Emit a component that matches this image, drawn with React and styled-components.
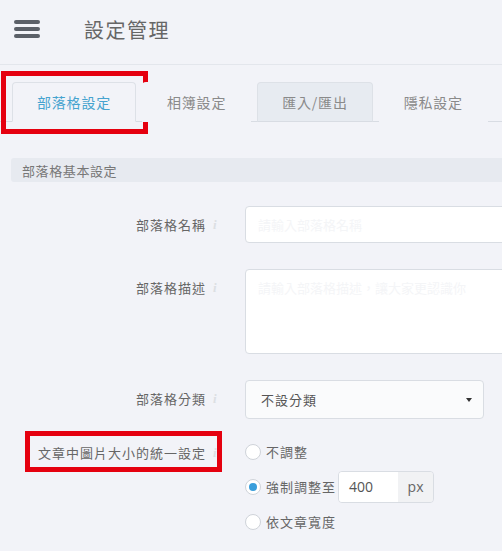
import styled, { createGlobalStyle } from "styled-components";

const GlobalStyle = createGlobalStyle`
  html, body {
    margin: 0;
    padding: 0;
    background: #f2f3f8;
    overflow: hidden;
  }
  body {
    font-family: "Noto Sans CJK TC", "Noto Sans", sans-serif;
    color: #666;
  }
  * { box-sizing: border-box; }
`;

const Page = styled.div`
  width: 680px;
  min-height: 551px;
`;

const TopBar = styled.header`
  display: flex;
  align-items: center;
  height: 65px;
  padding-left: 14px;
  border-bottom: 1px solid #e3e6ec;
`;

const Burger = styled.button`
  display: flex;
  flex-direction: column;
  gap: 3.5px;
  width: 26px;
  padding: 0;
  margin-top: -6px;
  border: 0;
  background: none;
  span {
    display: block;
    height: 3.5px;
    border-radius: 2px;
    background: #5b6068;
  }
`;

const Title = styled.h1`
  margin: -6px 0 0 44px;
  font-size: 20px;
  font-weight: 400;
  letter-spacing: 1.5px;
  color: #666;
`;

const TabBar = styled.nav`
  display: flex;
  gap: 6px;
  margin-top: 17px;
  padding-left: 12px;
  border-bottom: 1px solid #d8dce3;
`;

const Tab = styled.div`
  position: relative;
  height: 40px;
  margin-bottom: -1px;
  padding: 0 24px;
  display: flex;
  align-items: center;
  font-size: 14px;
  letter-spacing: 0.8px;
  border: 1px solid ${(p) => (p.$active || p.$shaded ? "#dde1e7" : "transparent")};
  border-bottom-color: ${(p) => (p.$active ? "#f2f3f8" : p.$shaded ? "#d8dce3" : "transparent")};
  border-radius: 4px 4px 0 0;
  background: ${(p) => (p.$shaded ? "#e7ebf1" : "#f2f3f8")};
  color: ${(p) => (p.$active ? "#46a3cf" : "#8a8a8a")};
`;

const Highlight = styled.div`
  position: absolute;
  border: 5px solid #e5000f;
  pointer-events: none;
  top: ${(p) => p.$top}px;
  left: ${(p) => p.$left}px;
  width: ${(p) => p.$w}px;
  height: ${(p) => p.$h}px;
`;

const Content = styled.section`
  padding: 36px 0 0 11px;
`;

const SectionHead = styled.div`
  height: 24px;
  display: flex;
  align-items: center;
  padding-left: 11px;
  border-radius: 3px 0 0 3px;
  background: #e7eaf0;
  font-size: 13px;
  letter-spacing: 0.6px;
  color: #777;
`;

const Row = styled.div`
  display: flex;
  align-items: flex-start;
  margin-top: ${(p) => p.$gap}px;
  margin-left: -11px;
`;

const LabelCell = styled.div`
  position: relative;
  width: 245px;
  height: 37px;
  flex-shrink: 0;
  display: flex;
  justify-content: flex-end;
  align-items: center;
  padding-right: 26px;
`;

const LabelText = styled.label`
  font-size: 13px;
  letter-spacing: 1px;
  color: #666;
`;

const Info = styled.span`
  width: 6px;
  margin-left: 7px;
  font-family: "Liberation Serif", serif;
  font-style: italic;
  font-weight: 700;
  font-size: 13px;
  color: #dcdfe3;
`;

const TextInput = styled.input`
  width: 400px;
  height: 37px;
  padding: 0 12px;
  border: 1px solid #d9dde3;
  border-radius: 4px;
  background: #fff;
  font-family: inherit;
  font-size: 13px;
  &::placeholder { color: #f4f5f7; }
`;

const TextArea = styled.textarea`
  width: 400px;
  height: 85px;
  padding: 8px 12px;
  border: 1px solid #d9dde3;
  border-radius: 4px;
  background: #fff;
  resize: none;
  font-family: inherit;
  font-size: 13px;
  &::placeholder { color: #f4f5f7; }
`;

const Select = styled.div`
  width: 239px;
  height: 39px;
  display: flex;
  align-items: center;
  justify-content: space-between;
  padding: 0 11px 0 15px;
  border: 1px solid #d9dde3;
  border-radius: 4px;
  background: #fafbfc;
  font-size: 13px;
  letter-spacing: 1px;
  color: #555;
`;

const Caret = styled.span`
  width: 0;
  height: 0;
  border-left: 3.5px solid transparent;
  border-right: 3.5px solid transparent;
  border-top: 4px solid #333;
`;

const RadioGroup = styled.div`
  display: flex;
  flex-direction: column;
`;

const RadioItem = styled.label`
  display: flex;
  align-items: center;
  height: 35px;
  font-size: 13px;
  letter-spacing: 1px;
  color: #666;
`;

const RadioDot = styled.span`
  width: 16px;
  height: 16px;
  margin-right: 5px;
  border-radius: 50%;
  border: 1px solid #cfd3d9;
  background: #fff;
  display: flex;
  align-items: center;
  justify-content: center;
  &::after {
    content: "";
    width: 8px;
    height: 8px;
    border-radius: 50%;
    background: ${(p) => (p.$checked ? "#3a9edb" : "transparent")};
  }
`;

const InputGroup = styled.div`
  display: flex;
  height: 32px;
  width: 96px;
  margin-left: 2px;
  border: 1px solid #d9dde3;
  border-radius: 4px;
  overflow: hidden;
  letter-spacing: 0;
`;

const NumberField = styled.div`
  flex: 1;
  display: flex;
  align-items: center;
  padding-left: 10px;
  background: #fff;
  font-family: "Open Sans", "Noto Sans", sans-serif;
  font-size: 14px;
  color: #555;
`;

const Addon = styled.div`
  width: 35px;
  display: flex;
  align-items: center;
  justify-content: center;
  background: #f1f2f4;
  font-family: "Open Sans", "Noto Sans", sans-serif;
  font-size: 14px;
  color: #666;
`;

const FieldLabel = ({ children, mark }) => (
  <LabelCell>
    <LabelText>{children}</LabelText>
    <Info>i</Info>
    {mark && <Highlight $top={-3} $left={25} $w={197} $h={41} />}
  </LabelCell>
);

export default function App() {
  return (
    <Page>
      <GlobalStyle />
      <TopBar>
        <Burger aria-label="menu">
          <span />
          <span />
          <span />
        </Burger>
        <Title>設定管理</Title>
      </TopBar>

      <TabBar>
        <Tab $active>
          部落格設定
          <Highlight $top={-12} $left={-12} $w={147} $h={63} />
        </Tab>
        <Tab>相簿設定</Tab>
        <Tab $shaded>匯入/匯出</Tab>
        <Tab>隱私設定</Tab>
      </TabBar>

      <Content>
        <SectionHead>部落格基本設定</SectionHead>

        <Row $gap={24}>
          <FieldLabel>部落格名稱</FieldLabel>
          <TextInput placeholder="請輸入部落格名稱" />
        </Row>

        <Row $gap={26}>
          <FieldLabel>部落格描述</FieldLabel>
          <TextArea placeholder="請輸入部落格描述，讓大家更認識你" />
        </Row>

        <Row $gap={26}>
          <FieldLabel>部落格分類</FieldLabel>
          <Select>
            不設分類
            <Caret />
          </Select>
        </Row>

        <Row $gap={15}>
          <FieldLabel mark>文章中圖片大小的統一設定</FieldLabel>
          <RadioGroup>
            <RadioItem>
              <RadioDot />
              不調整
            </RadioItem>
            <RadioItem>
              <RadioDot $checked />
              強制調整至
              <InputGroup>
                <NumberField>400</NumberField>
                <Addon>px</Addon>
              </InputGroup>
            </RadioItem>
            <RadioItem>
              <RadioDot />
              依文章寬度
            </RadioItem>
          </RadioGroup>
        </Row>
      </Content>
    </Page>
  );
}
